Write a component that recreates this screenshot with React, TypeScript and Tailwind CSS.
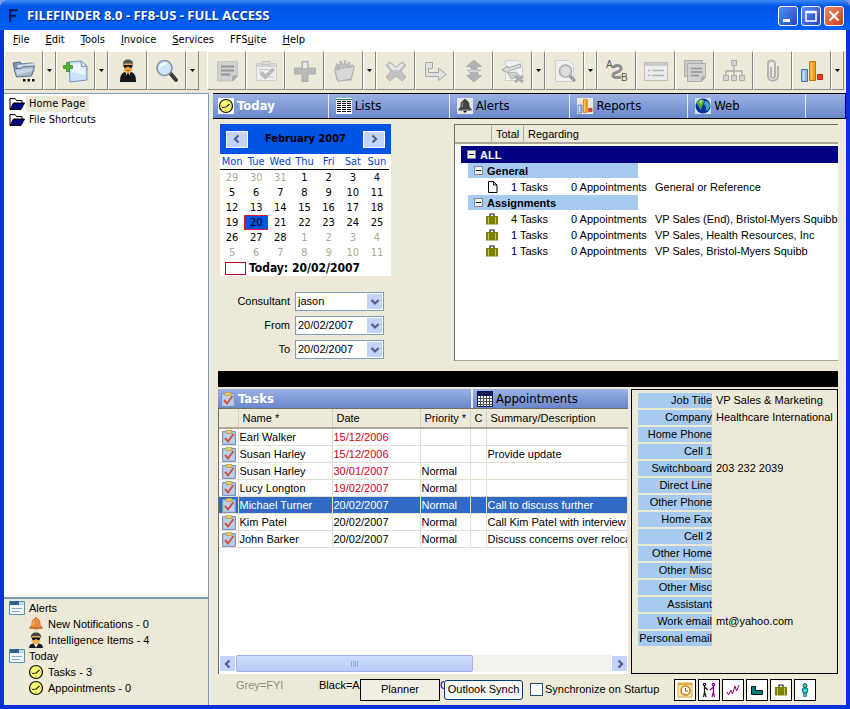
import { useState } from 'react';
import type { ReactNode } from 'react';

type IconProps = { className?: string };

const menuItems = [
  { before: '', key: 'F', after: 'ile' },
  { before: '', key: 'E', after: 'dit' },
  { before: '', key: 'T', after: 'ools' },
  { before: '', key: 'I', after: 'nvoice' },
  { before: '', key: 'S', after: 'ervices' },
  { before: 'FFS', key: 'u', after: 'ite' },
  { before: '', key: 'H', after: 'elp' },
];

const weekDays = ['Mon', 'Tue', 'Wed', 'Thu', 'Fri', 'Sat', 'Sun'];

const weeks = [
  [29, 30, 31, 1, 2, 3, 4],
  [5, 6, 7, 8, 9, 10, 11],
  [12, 13, 14, 15, 16, 17, 18],
  [19, 20, 21, 22, 23, 24, 25],
  [26, 27, 28, 1, 2, 3, 4],
  [5, 6, 7, 8, 9, 10, 11],
];

const tasks = [
  { name: 'Earl Walker', date: '15/12/2006', priority: '', summary: '', late: true },
  { name: 'Susan Harley', date: '15/12/2006', priority: '', summary: 'Provide update', late: true },
  { name: 'Susan Harley', date: '30/01/2007', priority: 'Normal', summary: '', late: true },
  { name: 'Lucy Longton', date: '19/02/2007', priority: 'Normal', summary: '', late: true },
  { name: 'Michael Turner', date: '20/02/2007', priority: 'Normal', summary: 'Call to discuss further', late: false },
  { name: 'Kim Patel', date: '20/02/2007', priority: 'Normal', summary: 'Call Kim Patel with interview times', late: false },
  { name: 'John Barker', date: '20/02/2007', priority: 'Normal', summary: 'Discuss concerns over relocation', late: false },
];

const assignments = [
  { count: 4, regarding: 'VP Sales (End), Bristol-Myers Squibb' },
  { count: 1, regarding: 'VP Sales, Health Resources, Inc' },
  { count: 1, regarding: 'VP Sales, Bristol-Myers Squibb' },
];

const contact = [
  ['Job Title', 'VP Sales & Marketing'],
  ['Company', 'Healthcare International'],
  ['Home Phone', ''],
  ['Cell 1', ''],
  ['Switchboard', '203 232 2039'],
  ['Direct Line', ''],
  ['Other Phone', ''],
  ['Home Fax', ''],
  ['Cell 2', ''],
  ['Other Home', ''],
  ['Other Misc', ''],
  ['Other Misc', ''],
  ['Assistant', ''],
  ['Work email', 'mt@yahoo.com'],
  ['Personal email', ''],
];

/* ---------- small icons ---------- */

function ClockIcon({ className = 'size-4' }: IconProps) {
  return (
    <svg viewBox="0 0 16 16" className={className}>
      <circle cx="8" cy="8" r="6.500" fill="#ffff70" stroke="#111" strokeWidth="1.200" />
      <path d="M4 9.500 8 9l3.500-3" fill="none" stroke="#222" strokeWidth="1.200" />
      <path d="M8 2.500v1M8 12.500v1M2.500 8h1M12.500 8h1" stroke="#777" />
    </svg>
  );
}

function FolderIcon() {
  return (
    <svg viewBox="0 0 16 16" className="size-4 shrink-0">
      <path d="M1 13V2.500h5l1.500 2H13v3" fill="#fff" stroke="#000" />
      <path d="M1 13.500 4.500 7H15.500l-3.500 6.500H1z" fill="#000080" stroke="#000" />
    </svg>
  );
}

function WindowIcon() {
  return (
    <svg viewBox="0 0 16 16" className="size-4 shrink-0">
      <path d="M.5 1.500h15v13H.5z" fill="#f4fafd" stroke="#5b93ad" />
      <path d="M1 1h9v4H1z" fill="#2a6496" />
      <path d="M10 2h5v3h-5z" fill="#b9dcec" />
      <path d="M3 8.500h10M3 11.500h8" stroke="#7fa8d8" />
    </svg>
  );
}

function BellIcon({ dark = false }: { dark?: boolean }) {
  return (
    <svg viewBox="0 0 16 16" className="size-4 shrink-0">
      {dark && <path d="M0 0h16v16H0z" fill="#e6e6e6" />}
      <path
        d="M8 1.500c-1 0-1.500.6-1.500 1.300C4.500 3.500 4 5 4 7c0 2-1 3-2.500 4.500h13C13 10 12 9 12 7c0-2-.5-3.500-2.500-4.200 0-.7-.5-1.300-1.500-1.300z"
        fill={dark ? '#444' : '#f08a35'}
        stroke={dark ? '#222' : '#c96a1c'}
        strokeWidth=".6"
      />
      <path d="M6 4.500c-.6 1-.6 3-1.200 4.500" stroke={dark ? '#aaa' : '#ffd9a8'} fill="none" />
      <path d="M1.500 11.500h13v1.300h-13z" fill={dark ? '#777' : '#b5541a'} />
      <path d="M6.500 13h3c0 2-3 2-3 0z" fill={dark ? '#111' : '#f6b25a'} />
    </svg>
  );
}

function AgentIcon({ className = 'size-4' }: IconProps) {
  return (
    <svg viewBox="0 0 18 24" className={className}>
      <path d="M1 23c0-6 1-8.500 5-10h6c4 1.500 5 4 5 10z" fill="#15171c" />
      <path d="m6 12 3 7 3-7z" fill="#fff" />
      <path d="m8.200 14-.5 4L9 21l1.300-3-.5-4z" fill="#111" />
      <path d="M5 4h8v7c-1 2.500-2.500 3.500-4 3.500S6 13.500 5 11z" fill="#f2a53a" />
      <path d="M4 7c-.8-5 2-6.500 5-6.500S14.800 2 14 7l-1-2.500H5z" fill="#555" />
      <path d="M4.500 6h9v1.500c-.3 1.700-3.500 1.700-4 0h-1c-.5 1.700-3.700 1.700-4 0z" fill="#111" />
      <path d="M7.500 11.500h3" stroke="#a85a10" />
    </svg>
  );
}

/* head and shoulders only, for the side list */
function AgentHeadIcon() {
  return (
    <svg viewBox="0 0 16 16" className="size-4 shrink-0">
      <path d="M1 16c0-3 2-4 4-4.500h6c2 .5 4 1.500 4 4.500z" fill="#15171c" />
      <path d="m5.500 11.500 2.500 4 2.500-4z" fill="#fff" />
      <path d="M4 4h8v5c-.5 2.500-2.500 3.500-4 3.500S4.500 11.500 4 9z" fill="#f2b04a" />
      <path d="M3 7c-1-5 2-6.500 5-6.500S14 2 13 7l-1-3H4z" fill="#444" />
      <path d="M4 5.500h8V7c-.5 1.500-3 1.500-3.500 0h-1C7 8.500 4.500 8.500 4 7z" fill="#111" />
    </svg>
  );
}

function ListIcon() {
  return (
    <svg viewBox="0 0 16 16" className="size-4 shrink-0" shapeRendering="crispEdges">
      <path d="M0 0h16v16H0z" fill="#fff" />
      <path d="M0 1.500h16" stroke="#1d6d6d" />
      <path d="M1 3.500h4M6 3.500h4M11 3.500h4M1 5.500h4M6 5.500h4M11 5.500h4M1 7.500h4M6 7.500h4M11 7.500h4M1 9.500h4M6 9.500h4M11 9.500h4M1 11.500h4M6 11.500h4M11 11.500h4M1 13.500h4M6 13.500h4M11 13.500h4" stroke="#111" />
    </svg>
  );
}

function ChartIcon({ className = 'size-4', tile = false }: IconProps & { tile?: boolean }) {
  return (
    <svg viewBox="0 0 24 24" className={className}>
      {tile && <path d="M0 0h24v24H0z" fill="#ece9d8" />}
      <path d="M1.500 10.500h6v12h-6z" fill="#8fb8ea" stroke="#4574b5" />
      <path d="M2.500 11.500h2v10h-2z" fill="#c9e0fa" />
      <path d="M9.500 2.500h6v19h-6z" fill="#f59a1c" stroke="#cc6f08" />
      <path d="M10.500 3.500h2v17h-2z" fill="#ffc565" />
      <path d="M17.500 15.500h5v5h-5z" fill="#e8402a" stroke="#b92716" />
    </svg>
  );
}

function GlobeIcon() {
  return (
    <svg viewBox="0 0 16 16" className="size-4 shrink-0">
      <path d="M0 0h16v16H0z" fill="#cfe0ee" />
      <circle cx="8" cy="8" r="7.500" fill="#0a2f9e" />
      <path d="M2 3.500C5 1 8 1 9 2.500 10 4 8 5 8 6.500S6 8 6.500 10 5 12 4 9 1 7 2 3.500z" fill="#55b03c" />
      <path d="M10 3c3 0 4.500 2 5 5-1 3-2 5-3.500 4.500S12 9 10.500 8 9 5 10 3z" fill="#3fa6c9" />
      <path d="M5 2.500c1-.5 2 0 2 1L5 6z" fill="#d9ea6a" />
    </svg>
  );
}

function TaskIcon() {
  return (
    <svg viewBox="0 0 14 16" className="h-4 w-[14px] shrink-0">
      <path d="M.5 2.500h13v13H.5z" fill="#a9c4ea" stroke="#7f93b8" />
      <path d="M2 4h10v10H2z" fill="#b9cff0" />
      <path d="M4 1.500h6v3H4z" fill="#ecc964" stroke="#b3933f" strokeWidth=".7" />
      <path d="m3 9 3 3.500L11.500 5" fill="none" stroke="#d2503c" strokeWidth="2" />
    </svg>
  );
}

function CalendarIcon() {
  return (
    <svg viewBox="0 0 16 16" className="size-4 shrink-0" shapeRendering="crispEdges">
      <path d="M0 0h16v16H0z" fill="#101a55" />
      <path d="M1 5h14v10H1z" fill="#fff" />
      <path d="M3.500 5v10M6.500 5v10M9.500 5v10M12.500 5v10M1 7.500h14M1 10.500h14M1 13.500h14" stroke="#555" />
    </svg>
  );
}

function CaseIcon({ className = 'h-3 w-[14px]' }: IconProps) {
  return (
    <svg viewBox="0 0 14 12" className={className}>
      <path d="M5 3V1h4v2" fill="none" stroke="#222" strokeWidth="1.200" />
      <path d="M1 3h12v8.500H1z" fill="#808000" />
      <path d="M3.500 4v7M10.500 4v7" stroke="#c0c070" />
    </svg>
  );
}

function PageIcon() {
  return (
    <svg viewBox="0 0 12 12" className="size-3">
      <path d="M1.500.5h5l3.500 3.500v7.500h-8.500z" fill="#fff" stroke="#000" />
      <path d="M6.500.5v3.500H10" fill="none" stroke="#000" />
    </svg>
  );
}

function Chevron({ dir }: { dir: 'left' | 'right' | 'down' }) {
  const paths = { left: 'M6.500 1.500 3 5l3.500 3.500', right: 'M3.500 1.500 7 5 3.500 8.500', down: 'M1.500 3 5 6.500 8.500 3' };
  return (
    <svg viewBox="0 0 10 10" className="size-[10px]">
      <path d={paths[dir]} fill="none" stroke="#4d6185" strokeWidth="2.200" />
    </svg>
  );
}

/* ---------- toolbar icons, all on a 24 unit grid ---------- */

function ToolSvg({ children }: { children: ReactNode }) {
  return (
    <svg viewBox="0 0 24 24" className="size-6 overflow-visible" fill="#cacaca" stroke="#adadad" strokeLinejoin="round">
      {children}
    </svg>
  );
}

const openFolder = (
  <ToolSvg>
    <path d="m1 4 7-1 2 2 10-1v12H4z" fill="#7d95bd" stroke="#596b8d" />
    <path d="m5 6 17-2v9H6z" fill="#dce8f7" stroke="#8fa0b8" strokeWidth=".6" />
    <path d="M4.500 18 2 10l7-1 2-1.500L22.500 7l-3 10z" fill="#a9b6ca" stroke="#5f7191" />
    <path d="m4 11 17-2-1 3-15 4z" fill="#cbd6e6" stroke="none" />
    <path d="M11 20h2.500v2.500H11zM15.500 20H18v2.500h-2.500zM20 20h2.500v2.500H20z" fill="#111" stroke="none" />
  </ToolSvg>
);
const newPage = (
  <ToolSvg>
    <path d="m5 3 12-1 6 5v14L6 23z" fill="#cbe2fb" stroke="#6f93bd" />
    <path d="m7 5 9-1 1 4 4 1v7L8 13z" fill="#e9f4ff" stroke="none" />
    <path d="m17 2 .5 5.500L23 7z" fill="#fff" stroke="#6f93bd" />
    <path d="M2.500 3.500h3v3h3v3h-3v3h-3v-3h-3v-3h3z" fill="#4fb32e" stroke="#2f8a17" strokeWidth=".7" />
  </ToolSvg>
);
const magnifier = (
  <ToolSvg>
    <path d="m15 14 6 7" stroke="#3c3c3c" strokeWidth="4" strokeLinecap="round" />
    <circle cx="9.500" cy="9" r="7.500" fill="#cfe5fa" stroke="#8093ab" strokeWidth="1.600" />
    <path d="M4.500 8c1-4 5-5 8-3.500-2 2-5 1.500-8 3.500z" fill="#fff" stroke="none" />
  </ToolSvg>
);
const note = (
  <ToolSvg>
    <path d="M2.500 2.500h20V17l-5 5h-15z" fill="#d0d0d0" stroke="#c4c4c4" />
    <path d="M6 7.500h13M6 11.500h13M6 15.500h9" stroke="#959595" strokeWidth="2" />
    <path d="M22.500 17h-5v5z" fill="#a5a5a5" />
  </ToolSvg>
);
const checkNote = (
  <ToolSvg>
    <path d="M2.500 4.500h20v17h-20z" fill="#efefef" stroke="#d0d0d0" />
    <path d="M2.500 4.500h20v3h-20z" fill="#d6d6d6" stroke="#ccc" />
    <path d="M8 2.500h8v3H8z" fill="#ddd" stroke="#c2c2c2" />
    <path d="m6 15 3-2 2.500 3 7-7 2 2-9 9z" fill="#bbb" stroke="#b0b0b0" />
    <path d="M5 10.500h10M5 13h4M14 18h6" stroke="#c2c2c2" />
  </ToolSvg>
);
const plus = (
  <ToolSvg>
    <path d="M9 2.500h6V9h7.500v6H15v7.500H9V15H1.500V9H9z" fill="#b9b9b9" stroke="#adadad" />
    <path d="M10 3.500h4V9h-4z" fill="#ececec" stroke="none" />
  </ToolSvg>
);
const folderUp = (
  <ToolSvg>
    <path d="M3 8h18l-2 13H5z" fill="#bcbcbc" />
    <path d="m4 5 3 2M8 2l2 4M13 1v5M18 3l-3 4M21 6l-3 2" strokeWidth="2.500" stroke="#b8b8b8" />
    <path d="M7 6h10v5H7z" fill="#cbcbcb" stroke="#b0b0b0" />
    <path d="m2.500 11 5-.5L9 9l13.500-1.500L19 20 6 22.500z" fill="#d8d8d8" />
  </ToolSvg>
);
const cross = (
  <ToolSvg>
    <path d="m2 6 4-3 6 5 6-5 4 3-5 6 5 6-4 4-6-5-6 5-4-4 5-6z" fill="#c2c2c2" stroke="#b3b3b3" />
    <path d="m4 6 2-2 6 5 6-5 2 2-5 5H8z" fill="#e4e4e4" stroke="none" />
  </ToolSvg>
);
const forward = (
  <ToolSvg>
    <path d="M2.500 3.500h7v6h-4v4h10V9l8 6.500-8 6v-4h-13z" fill="#e0e0e0" stroke="#a7a7a7" />
  </ToolSvg>
);
const upDown = (
  <ToolSvg>
    <path d="m12 1 7.500 6.500H15v4h4L12 12l-7-.5h4v-4H4.500z" fill="#b3b3b3" />
    <path d="m12 23 7.500-6.500H16v-4H8v4H4.500z" fill="#b3b3b3" />
    <path d="M8 12h8" stroke="#e4e4e4" strokeWidth="1.500" />
  </ToolSvg>
);
const pageSwap = (
  <ToolSvg>
    <path d="M4.500 1.500h13l4 4v16h-17z" fill="#f0f0f0" stroke="#cfcfcf" />
    <path d="m1 11 6-4v2l12-4 1 3-12 4v2z" fill="#dcdcdc" stroke="#a6a6a6" />
    <path d="m7 14 8-1 4 4-9 3z" fill="#d0d0d0" stroke="#b0b0b0" />
    <path d="m14 17 8 6M22 17l-8 6" strokeWidth="3" />
  </ToolSvg>
);
const pageSearch = (
  <ToolSvg>
    <path d="M2.500 1.500h13l5 5v16h-18z" fill="#f0f0f0" stroke="#cfcfcf" />
    <path d="m16 16 5 5" strokeWidth="3.500" stroke="#a0a0a0" strokeLinecap="round" />
    <circle cx="12.500" cy="12" r="6" fill="#dcdcdc" stroke="#adadad" strokeWidth="1.600" />
  </ToolSvg>
);
const sortAB = (
  <ToolSvg>
    <path d="M8 9c2-4 9-3 8 1s-8 3-8 6 4 3 8 2" fill="none" stroke="#8f8f8f" strokeWidth="3" />
    <g fill="#555" stroke="none" fontFamily="Liberation Sans, sans-serif" fontSize="10">
      <text x="1" y="9">A</text>
      <text x="16" y="22">B</text>
    </g>
  </ToolSvg>
);
const form = (
  <ToolSvg>
    <path d="M.5 3.500h23v18H.5z" fill="#ececec" stroke="#bdbdbd" />
    <path d="M1 4h22v3H1z" fill="#cbcbcb" stroke="none" />
    <path d="M4 11.500h2M4 16.500h2M8 11.500h12M8 16.500h12" stroke="#b3b3b3" strokeWidth="1.500" />
  </ToolSvg>
);
const copies = (
  <ToolSvg>
    <path d="M1.500 1.500h18v16h-18z" fill="#cacaca" />
    <path d="M4.500 4.500h18V18l-4 4.500h-14z" fill="#d0d0d0" />
    <path d="M8 9.500h11M8 13h11M8 16.500h8" stroke="#939393" strokeWidth="1.500" />
    <path d="M22.500 18h-4v4.500z" fill="#a8a8a8" />
  </ToolSvg>
);
const orgChart = (
  <ToolSvg>
    <path d="M12 6v6M4 17v-5h16v5M12 12v5" fill="none" strokeWidth="1.500" />
    <path d="M9.500 1.500h5v5h-5zM1.500 16.500h5v5h-5zM9.500 16.500h5v5h-5zM17.500 16.500h5v5h-5z" fill="#d4d4d4" />
  </ToolSvg>
);
const clip = (
  <ToolSvg>
    <path d="M10 8v9c0 2.500 4 2.500 4 0V5c0-4.500-7-4.500-7 0v12c0 6.500 10 6 10 0V7" fill="none" stroke="#adadad" strokeWidth="1.800" />
  </ToolSvg>
);

const toolGroups = [
  [
    { label: 'Open', icon: openFolder, menu: true },
    { label: 'New', icon: newPage, menu: true },
    { label: 'Person', icon: <AgentIcon className="h-6 w-[18px]" />, menu: false },
    { label: 'Search', icon: magnifier, menu: true },
  ],
  [
    { label: 'Note', icon: note, menu: false },
    { label: 'Task', icon: checkNote, menu: false },
    { label: 'Add', icon: plus, menu: false },
    { label: 'File', icon: folderUp, menu: true },
    { label: 'Delete', icon: cross, menu: false },
    { label: 'Forward', icon: forward, menu: false },
    { label: 'Move', icon: upDown, menu: false },
    { label: 'Merge', icon: pageSwap, menu: true },
    { label: 'Preview', icon: pageSearch, menu: true },
    { label: 'Sort', icon: sortAB, menu: false },
    { label: 'Form', icon: form, menu: false },
    { label: 'Copies', icon: copies, menu: false },
    { label: 'Organisation', icon: orgChart, menu: false },
    { label: 'Attach', icon: clip, menu: false },
    { label: 'Reports', icon: <ChartIcon className="size-6" />, menu: true },
  ],
];

const raised = 'border border-t-white border-l-white border-r-[#8a887c] border-b-[#8a887c] flex items-center justify-center';
const tahoma = "font-['DejaVu_Sans_Condensed','Noto_Sans',sans-serif]";
const tabBlue = 'bg-linear-to-b from-[#9bb1e4] to-[#6b87ca]';

function TitleBar() {
  return (
    <header className="flex h-[30px] shrink-0 items-center rounded-t-lg bg-linear-to-b from-[#3a8cf8] via-[#0054e3] via-20% to-[#0060f8] pt-[2px] pr-[6px] pl-[9px]">
      <svg viewBox="0 0 10 14" className="mr-2 h-[14px] w-[10px]">
        <path d="M1 13V1h8M1 7h6" fill="none" stroke="#001a66" strokeWidth="2.500" />
      </svg>
      <h1 className="flex-1 truncate font-['Open_Sans',sans-serif] text-[13px] font-bold text-white [text-shadow:1px_1px_#0a2a8a]">
        FILEFINDER 8.0 - FF8-US - FULL ACCESS
      </h1>
      <div className="flex gap-[3px]">
        <button aria-label="Minimize" className="flex size-5 items-center justify-center rounded-[3px] border border-white bg-linear-to-br from-[#5c8cf0] to-[#1c48c8]">
          <svg viewBox="0 0 16 16" className="size-4"><path d="M3 11h7v3H3z" fill="#fff" /></svg>
        </button>
        <button aria-label="Maximize" className="flex size-5 items-center justify-center rounded-[3px] border border-white bg-linear-to-br from-[#5c8cf0] to-[#1c48c8]">
          <svg viewBox="0 0 16 16" className="size-4"><path d="M3 3.500h10V13H3zM3 4.500h10" fill="none" stroke="#fff" strokeWidth="1.500" /></svg>
        </button>
        <button aria-label="Close" className="flex size-5 items-center justify-center rounded-[3px] border border-white bg-linear-to-br from-[#f08a6c] to-[#cc3a14]">
          <svg viewBox="0 0 16 16" className="size-4"><path d="m3.500 3.500 9 9M12.500 3.500l-9 9" stroke="#fff" strokeWidth="2" /></svg>
        </button>
      </div>
    </header>
  );
}

function Toolbar() {
  return (
    <div className="flex h-[40px] shrink-0 gap-2 overflow-hidden">
      {toolGroups.map((group, i) => (
        <div key={i} className="flex">
          {group.map((tool) => (
            <div key={tool.label} className="flex">
              <button aria-label={tool.label} className={`${raised} h-[39px] w-[39px]`}>
                {tool.icon}
              </button>
              {tool.menu && (
                <button aria-label={`${tool.label} menu`} className={`${raised} h-[39px] w-[13px]`}>
                  <svg viewBox="0 0 5 3" className="h-[3px] w-[5px] shrink-0"><path d="M0 0h5L2.500 3z" /></svg>
                </button>
              )}
            </div>
          ))}
        </div>
      ))}
    </div>
  );
}

function Sidebar() {
  return (
    <aside className="flex w-[205px] shrink-0 flex-col border-r border-[#7f9db9]">
      <nav className={`flex-1 border-t border-[#7f9db9] bg-white pt-[2px] pl-[5px] text-[11px] leading-4 ${tahoma}`}>
        <a href="#home" className="flex items-center">
          <FolderIcon />
          <span className="ml-[1px] bg-[#ece9d8] pr-1 pl-[3px]">Home Page</span>
        </a>
        <a href="#shortcuts" className="flex items-center">
          <FolderIcon />
          <span className="ml-1">File Shortcuts</span>
        </a>
      </nav>
      <ul className="h-[108px] border-t-2 border-[#7f9db9] pt-[1px] pl-[5px] text-[11px] leading-4">
        <li className="flex gap-1"><WindowIcon />Alerts</li>
        <li className="flex gap-1 pl-[19px]"><BellIcon />New Notifications - 0</li>
        <li className="flex gap-1 pl-[19px]"><AgentHeadIcon />Intelligence Items - 4</li>
        <li className="flex gap-1"><WindowIcon />Today</li>
        <li className="flex gap-1 pl-[19px]"><ClockIcon />Tasks - 3</li>
        <li className="flex gap-1 pl-[19px]"><ClockIcon />Appointments - 0</li>
      </ul>
    </aside>
  );
}

function MainTabs() {
  const tab = 'flex items-center gap-[3px] border-l border-[#e4e9f6] pl-[7px]';
  return (
    <div role="tablist" className={`grid h-[26px] grid-cols-[115fr_121fr_121fr_118fr_118fr_40fr] border border-l-0 border-black text-[13px] ${tahoma} ${tabBlue}`}>
      <button role="tab" aria-selected="true" className="flex items-center gap-[3px] pl-[5px] font-bold text-white">
        <span className="flex size-4 bg-white"><ClockIcon /></span>Today
      </button>
      <button role="tab" aria-selected="false" className={tab}><ListIcon />Lists</button>
      <button role="tab" aria-selected="false" className={tab}><BellIcon dark />Alerts</button>
      <button role="tab" aria-selected="false" className={tab}><ChartIcon tile />Reports</button>
      <button role="tab" aria-selected="false" className={tab}><GlobeIcon />Web</button>
      <span className="border-l border-[#e4e9f6]" />
    </div>
  );
}

function MonthCalendar() {
  return (
    <div className={`w-[171px] bg-white text-[11px] ${tahoma}`}>
      <div className="flex h-[30px] items-center justify-between bg-[#0054e3] px-[6px] font-bold">
        <button aria-label="Previous month" className="flex h-[17px] w-[22px] items-center justify-center border border-white bg-[#c3d3fb]"><Chevron dir="left" /></button>
        February 2007
        <button aria-label="Next month" className="flex h-[17px] w-[22px] items-center justify-center border border-white bg-[#c3d3fb]"><Chevron dir="right" /></button>
      </div>
      <table className="w-[169px] table-fixed border-collapse text-center leading-[15px]">
        <thead>
          <tr className="border-b border-black text-[#0046d5]">
            {weekDays.map((d) => <th key={d} className="p-0 font-normal">{d}</th>)}
          </tr>
        </thead>
        <tbody>
          {weeks.map((week, row) => (
            <tr key={row}>
              {week.map((day, col) => {
                const outside = (row === 0 && day > 20) || (row > 3 && day < 20);
                const today = row === 3 && day === 20;
                return (
                  <td key={col} className={`h-[15px] p-0 ${outside ? 'text-[#aca899]' : ''}`}>
                    {today ? <span className="block h-[15px] border border-[#e0182c] bg-[#0054e3] leading-[13px]">{day}</span> : day}
                  </td>
                );
              })}
            </tr>
          ))}
        </tbody>
      </table>
      <div className="flex h-4 items-center gap-[3px] pl-[5px] text-[12px] font-bold">
        <span className="h-[13px] w-[21px] border border-[#c00020]" />
        Today: 20/02/2007
      </div>
    </div>
  );
}

function DropDown({ id, label, value }: { id: string; label: string; value: string }) {
  return (
    <div className="flex items-center">
      <label htmlFor={id} className="w-[75px] pr-[5px] text-right">{label}</label>
      <div className="relative h-[19px] w-[89px]">
        <select id={id} className="h-full w-full appearance-none border border-[#7f9db9] bg-white pl-[2px] text-[11px] leading-none">
          <option>{value}</option>
        </select>
        <span className="pointer-events-none absolute top-[2px] right-[2px] flex size-[15px] items-center justify-center bg-[#c3d3fb]">
          <Chevron dir="down" />
        </span>
      </div>
    </div>
  );
}

function GroupToggle() {
  return (
    <button aria-label="Collapse" className="flex size-[9px] items-center justify-center border border-[#7f8a99] bg-[#f4f2e8]">
      <span className="h-px w-[5px] bg-black" />
    </button>
  );
}

function GroupRow({ title }: { title: string }) {
  return (
    <tr>
      <td colSpan={4} className="p-0">
        <div className="ml-[13px] flex h-4 w-[170px] items-center gap-1 border-b border-white bg-[#a6caf0] pl-[6px] font-bold">
          <GroupToggle />{title}
        </div>
      </td>
    </tr>
  );
}

function RegardingPanel() {
  return (
    <section className="min-w-0 flex-1 overflow-hidden border border-r-0 border-[#aca899] border-t-[#716f64] border-l-[#716f64] bg-white">
      <div className="flex h-[19px] items-center border-b-2 border-[#aca899] bg-[#ece9d8] leading-4">
        <span className="w-[36px]" />
        <span className="w-[32px] border-l border-[#aca899] pl-1">Total</span>
        <span className="border-l border-[#aca899] pl-1">Regarding</span>
      </div>
      <table className="mt-[2px] w-full table-fixed border-collapse text-left leading-4 whitespace-nowrap">
        <colgroup>
          <col className="w-[56px]" />
          <col className="w-[60px]" />
          <col className="w-[84px]" />
          <col />
        </colgroup>
        <tbody>
          <tr>
            <td colSpan={4} className="p-0">
              <div className="ml-[6px] flex h-[17px] items-center gap-1 bg-[#000080] pl-[6px] font-bold text-white">
                <GroupToggle />ALL
              </div>
            </td>
          </tr>
          <GroupRow title="General" />
          <tr>
            <td className="h-4 p-0 pl-8"><PageIcon /></td>
            <td className="p-0">1 Tasks</td>
            <td className="p-0">0 Appointments</td>
            <td className="p-0">General or Reference</td>
          </tr>
          <GroupRow title="Assignments" />
          {assignments.map((a) => (
            <tr key={a.regarding}>
              <td className="h-4 p-0 pl-[30px]"><CaseIcon /></td>
              <td className="p-0">{a.count} Tasks</td>
              <td className="p-0">0 Appointments</td>
              <td className="p-0">{a.regarding}</td>
            </tr>
          ))}
        </tbody>
      </table>
    </section>
  );
}

function TaskPanel() {
  const [selected, setSelected] = useState(4);
  const head = 'border-r border-[#d5d2c3] p-0 pl-1 font-normal';
  const cell = 'overflow-hidden border-r border-b border-[#e3e0d2] p-0 pl-[1px]';

  return (
    <section className="flex min-w-0 flex-col">
      <div role="tablist" className={`grid h-[19px] grid-cols-[253fr_157fr] text-[13px] ${tahoma} ${tabBlue}`}>
        <button role="tab" aria-selected="true" className="flex items-center gap-[3px] pl-[3px] font-bold text-white">
          <TaskIcon />Tasks
        </button>
        <button role="tab" aria-selected="false" className="flex items-center gap-[3px] border-l-2 border-[#e4e9f6] pl-1">
          <CalendarIcon />Appointments
        </button>
      </div>
      <div className="flex flex-1 flex-col border-t border-l border-[#716f64] bg-white">
        <table className="w-full table-fixed border-collapse text-left whitespace-nowrap">
          <colgroup>
            <col className="w-[19px]" />
            <col className="w-[94px]" />
            <col className="w-[88px]" />
            <col className="w-[50px]" />
            <col className="w-[16px]" />
            <col />
          </colgroup>
          <thead>
            <tr className="h-[19px] border-b-2 border-[#aca899] bg-[#ece9d8]">
              <th className={head} />
              <th className={head}>Name *</th>
              <th className={head}>Date</th>
              <th className={head}>Priority *</th>
              <th className={head}>C</th>
              <th className="p-0 pl-1 font-normal">Summary/Description</th>
            </tr>
          </thead>
          <tbody>
            {tasks.map((t, i) => (
              <tr
                key={i}
                onClick={() => setSelected(i)}
                className={`h-[17px] leading-4 ${i === selected ? 'bg-[#316ac5] text-white' : ''}`}
              >
                <td className={`${cell} pl-[3px]`}><TaskIcon /></td>
                <td className={cell}>{t.name}</td>
                <td className={`${cell} ${t.late ? 'text-[#d0021b]' : ''}`}>{t.date}</td>
                <td className={cell}>{t.priority}</td>
                <td className={cell} />
                <td className={cell}>{t.summary}</td>
              </tr>
            ))}
          </tbody>
        </table>
        <div className="mt-auto mb-[2px] flex h-[17px] bg-[#f3f2ec]">
          <button aria-label="Scroll left" className="flex w-[17px] items-center justify-center rounded-xs border border-white bg-[#c3d3fb]"><Chevron dir="left" /></button>
          <div className="flex w-[58%] items-center justify-center gap-[1px] rounded-xs border border-[#9fb5ea] bg-linear-to-b from-[#cfddff] to-[#b9cbf6]">
            <span className="h-[6px] w-px bg-[#8ea8e6]" />
            <span className="h-[6px] w-px bg-[#8ea8e6]" />
            <span className="h-[6px] w-px bg-[#8ea8e6]" />
            <span className="h-[6px] w-px bg-[#8ea8e6]" />
          </div>
          <button aria-label="Scroll right" className="ml-auto flex w-[17px] items-center justify-center rounded-xs border border-white bg-[#c3d3fb]"><Chevron dir="right" /></button>
        </div>
      </div>
    </section>
  );
}

function ContactPanel() {
  return (
    <section className="min-w-0 border border-black pt-[3px] pl-[6px]">
      <dl className="leading-[15px]">
        {contact.map(([label, value], i) => (
          <div key={i} className="flex h-[17px] whitespace-nowrap">
            <dt className="h-[15px] w-[74px] bg-[#a6caf0] text-right">{label}</dt>
            <dd className="pl-1">{value}</dd>
          </div>
        ))}
      </dl>
    </section>
  );
}

const footerIcons = [
  {
    label: 'Clock',
    icon: <svg viewBox="0 0 16 16" className="size-4"><path d="M1 1h14v14H1z" fill="#f8e7a8" stroke="#dcab3c" /><path d="M1 1h14v2H1z" fill="#e0aa38" /><circle cx="8.500" cy="8.500" r="4.500" fill="#fff" stroke="#c8811a" strokeWidth="1.500" /><path d="M8.500 6v3h2.500" fill="none" stroke="#8a5a10" /></svg>,
  },
  {
    label: 'Meetings',
    icon: <svg viewBox="0 0 16 16" className="size-4" fill="none" strokeWidth="1.200"><path d="M3.500 4v6l-1 5M3.500 10 5 15M3.500 5 7 8" stroke="#111" /><path d="M12.500 4v6L11 15M12.500 10l1 5M12.500 5 9 8" stroke="#800080" /><circle cx="3.500" cy="2.500" r="1.200" stroke="#111" /><circle cx="12.500" cy="2.500" r="1.200" stroke="#800080" /></svg>,
  },
  {
    label: 'Activity',
    icon: <svg viewBox="0 0 16 16" className="size-4" fill="none"><path d="m2 10 1.500 3L6 8l1.500 4L10 4l1.500 5L14 3" stroke="#900060" /></svg>,
  },
  {
    label: 'Company',
    icon: <svg viewBox="0 0 16 16" className="size-4"><path d="M2.500 4.500h4v4h7v4h-11z" fill="#007d7d" stroke="#111" /></svg>,
  },
  { label: 'Assignments', icon: <CaseIcon className="h-3 w-[14px]" /> },
  {
    label: 'Person',
    icon: <svg viewBox="0 0 16 16" className="size-4"><circle cx="8" cy="3.500" r="2" fill="#20d8d8" stroke="#111" strokeWidth=".7" /><path d="M5 7c1-1.500 5-1.500 6 0l-1 4H6z" fill="#20e0e0" stroke="#111" strokeWidth=".7" /><path d="M7 11v4M9 11v4" stroke="#007070" strokeWidth="1.300" /></svg>,
  },
];

function Footer() {
  return (
    <footer className="flex h-[31px] shrink-0 items-center whitespace-nowrap">
      <span className="ml-[23px] w-[83px] pb-2 text-[#8d8b80]">Grey=FYI</span>
      <span className="w-[41px] overflow-hidden pb-2">Black=A</span>
      <button className="h-[22px] w-[80px] border border-black bg-[#f1efe4]">Planner</button>
      <span className="w-1 overflow-hidden pb-2 text-[#0000c0]">C</span>
      <button className="h-5 w-[79px] rounded-[3px] border border-[#003c74] bg-[#f7f6f0]">Outlook Synch</button>
      <input id="sync" type="checkbox" className="ml-[7px] size-[13px] appearance-none border border-[#1c5180] bg-white checked:bg-[#21a121]" />
      <label htmlFor="sync" className="pl-[2px]">Synchronize on Startup</label>
      <div className="ml-auto flex gap-[2px] pr-[30px]">
        {footerIcons.map((f) => (
          <button key={f.label} aria-label={f.label} className="flex size-[22px] items-center justify-center border border-black bg-white">
            {f.icon}
          </button>
        ))}
      </div>
    </footer>
  );
}

export default function App() {
  return (
    <div className="flex min-h-screen flex-col bg-[#7a96df] font-['Liberation_Sans',Arial,sans-serif] text-[11px] text-black">
      <TitleBar />
      <div className="flex flex-1 flex-col border-4 border-t-0 border-[#0831d9] bg-[#ece9d8]">
        <nav className={`flex h-[21px] shrink-0 items-center gap-4 bg-white pl-[9px] ${tahoma}`}>
          {menuItems.map((m) => (
            <button key={m.key}>
              {m.before}<u>{m.key}</u>{m.after}
            </button>
          ))}
        </nav>
        <Toolbar />
        <div className="flex flex-1 pt-[2px]">
          <Sidebar />
          <main className="flex min-w-0 flex-1 flex-col pl-1">
            <MainTabs />
            <div className="flex h-[252px] shrink-0 pt-[5px] pr-2 pb-[10px]">
              <div className="flex w-[241px] shrink-0 flex-col pl-[7px]">
                <MonthCalendar />
                <div className="mt-4 flex flex-col gap-[5px]">
                  <DropDown id="consultant" label="Consultant" value="jason" />
                  <DropDown id="from" label="From" value="20/02/2007" />
                  <DropDown id="to" label="To" value="20/02/2007" />
                </div>
              </div>
              <RegardingPanel />
            </div>
            <div className="mr-2 ml-[5px] h-4 bg-black" />
            <div className="mt-[2px] mr-2 ml-[5px] grid flex-1 grid-cols-[410fr_207fr] gap-[3px]">
              <TaskPanel />
              <ContactPanel />
            </div>
            <Footer />
          </main>
        </div>
      </div>
    </div>
  );
}
